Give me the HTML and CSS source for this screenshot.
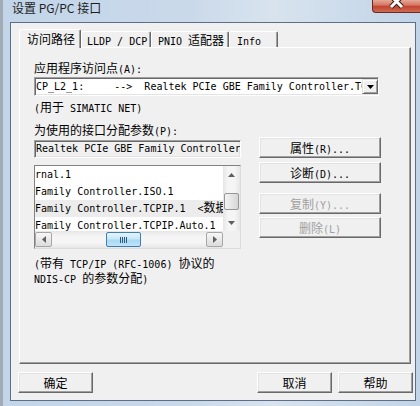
FILE: index.html
```html
<!DOCTYPE html>
<html lang="zh-CN">
<head>
    <meta charset="UTF-8">
    <meta name="viewport" content="width=device-width, initial-scale=1.0">
    <title>设置 PG/PC 接口</title>
    <link rel="stylesheet" href="styles.css">
</head>
<body>
    <div class="window">
        <div class="titlebar">
            <span class="title">设置 PG/PC 接口</span>
            <div class="close-btn" title="关闭">
                <svg width="47" height="13" viewBox="0 0 47 13">
                    <path d="M18 -4 L29 7 M29 -4 L18 7" stroke="#3b1a16" stroke-width="5" fill="none"/>
                    <path d="M18 -4 L29 7 M29 -4 L18 7" stroke="#fff" stroke-width="3" fill="none"/>
                </svg>
            </div>
        </div>

        <div class="client">
            <div class="tabs">
                <div class="tab active">访问路径</div>
                <div class="tab tab-lldp"><span class="m">LLDP / DCP</span></div>
                <div class="tab tab-pnio"><span class="m">PNIO </span>适配器</div>
                <div class="tab tab-info"><span class="m">Info</span></div>
            </div>

            <div class="tab-panel">
                <div class="label">应用程序访问点<span class="m">(A):</span></div>
                <div class="combo">
                    <span class="combo-text m">CP_L2_1:     -->  Realtek PCIe GBE Family Controller.TCPIP.1</span>
                    <span class="combo-arrow">
                        <svg width="7" height="4" viewBox="0 0 7 4"><polygon points="0,0 7,0 3.5,4" fill="#000"/></svg>
                    </span>
                </div>
                <div class="hint"><span class="m">(</span>用于<span class="m"> SIMATIC NET)</span></div>
                <div class="label label-params">为使用的接口分配参数<span class="m">(P):</span></div>

                <div class="params">
                    <div class="params-left">
                        <div class="field"><span class="m">Realtek PCIe GBE Family Controller.TCPIP.1</span></div>

                        <div class="listbox">
                            <div class="list-items">
                                <div class="list-item">rnal.1</div>
                                <div class="list-item">Family Controller.ISO.1</div>
                                <div class="list-item selected">Family Controller.TCPIP.1  &lt;<span class="cj">数据</span></div>
                                <div class="list-item">Family Controller.TCPIP.Auto.1</div>
                            </div>
                            <div class="vscroll">
                                <div class="sb-arrow">
                                    <svg width="7" height="4" viewBox="0 0 7 4"><polygon points="3.5,0 7,4 0,4" fill="#5f5f5f"/></svg>
                                </div>
                                <div class="vthumb"></div>
                                <div class="sb-arrow sb-end">
                                    <svg width="7" height="4" viewBox="0 0 7 4"><polygon points="0,0 7,0 3.5,4" fill="#5f5f5f"/></svg>
                                </div>
                            </div>
                            <div class="hscroll">
                                <div class="hbtn">
                                    <svg width="4" height="7" viewBox="0 0 4 7"><polygon points="0,3.5 4,0 4,7" fill="#5f5f5f"/></svg>
                                </div>
                                <div class="hthumb">
                                    <svg width="7" height="6" viewBox="0 0 7 6">
                                        <path d="M0.5 0 V6 M2.5 0 V6 M4.5 0 V6 M6.5 0 V6" stroke="#2c5a7c" stroke-width="1"/>
                                    </svg>
                                </div>
                                <div class="hbtn hbtn-end">
                                    <svg width="4" height="7" viewBox="0 0 4 7"><polygon points="0,0 4,3.5 0,7" fill="#5f5f5f"/></svg>
                                </div>
                            </div>
                            <div class="sb-corner"></div>
                        </div>

                        <p class="note"><span class="m">(</span>带有<span class="m"> TCP/IP (RFC-1006) </span>协议的<br><span class="m">NDIS-CP </span>的参数分配<span class="m">)</span></p>
                    </div>

                    <div class="params-buttons">
                        <button class="btn btn-side">属性<span class="m">(R)...</span></button>
                        <button class="btn btn-side btn-diag">诊断<span class="m">(D)...</span></button>
                        <button class="btn btn-side btn-copy" disabled>复制<span class="m">(Y)...</span></button>
                        <button class="btn btn-side btn-delete" disabled>删除<span class="m">(L)</span></button>
                    </div>
                </div>
            </div>

            <div class="dialog-footer">
                <button class="btn btn-footer">确定</button>
                <div class="footer-right">
                    <button class="btn btn-footer">取消</button>
                    <button class="btn btn-footer">帮助</button>
                </div>
            </div>
        </div>
    </div>
</body>
</html>
```

FILE: styles.css
```css
* {
    box-sizing: border-box;
}

body {
    margin: 0;
    width: 420px;
    height: 406px;
    overflow: hidden;
    font-family: "Noto Sans CJK SC", "Noto Sans", sans-serif;
    font-size: 12px;
    color: #000;
}

/* SimSun-like half width latin: 6px per char */
.m {
    font-family: "DejaVu Sans Mono", "Liberation Mono", monospace;
    font-size: 10px;
    line-height: 1;
    white-space: pre;
}

.cj {
    font-family: "Noto Sans CJK SC", sans-serif;
    font-size: 12px;
    line-height: 1;
}

.window {
    height: 406px;
    display: flex;
    flex-direction: column;
    padding: 0 4px 5px 10px;
    background: linear-gradient(90deg, #a3acb6 0, #a3acb6 3px, #c2d5e9 3px, #cad9ea 45%, #d8e3ee 65%, #c1d4e8 100%);
}

.titlebar {
    height: 22px;
    display: flex;
    justify-content: space-between;
    align-items: flex-start;
}

.title {
    padding-left: 2px;
    line-height: 16px;
    color: #1e1e1e;
}

.close-btn {
    width: 48px;
    height: 13px;
    margin-right: -4px;
    border-left: 1px solid #6b2a22;
    border-bottom: 1px solid #6b2a22;
    border-radius: 0 0 0 4px;
    background: linear-gradient(#e6a796 0%, #d77a66 40%, #c24532 55%, #cf6b52 100%);
    overflow: hidden;
}

.close-btn svg {
    display: block;
}

.client {
    flex: 1;
    display: flex;
    flex-direction: column;
    background: #f0f0f0;
    border: 1px solid #5d6f86;
}

/* ---- tabs ---- */
.tabs {
    position: relative;
    z-index: 1;
    display: flex;
    align-items: flex-end;
    height: 18px;
    margin: 6px 0 0 8px;
}

.tab {
    height: 16px;
    line-height: 15px;
    background: #f0f0f0;
    border: 1px solid;
    border-color: #fff #696969 transparent #fff;
    border-bottom: none;
    border-radius: 2px 2px 0 0;
    box-shadow: inset -1px 0 #a0a0a0;
    white-space: nowrap;
}

.tab.active {
    width: 62px;
    height: 19px;
    margin-bottom: -1px;
    padding-left: 7px;
    line-height: 17px;
}

.tab-lldp {
    width: 70px;
    padding-left: 5px;
}

.tab-pnio {
    width: 78px;
    padding-left: 6px;
}

.tab-info {
    width: 49px;
    padding-left: 7px;
}

.tab-panel {
    height: 317px;
    margin: 0 4px 0 8px;
    padding: 13px 0 0 14px;
    border: 1px solid;
    border-color: #fff #696969 #696969 #fff;
    box-shadow: inset -1px -1px #a0a0a0;
}

.label {
    line-height: 14px;
}

.label-params {
    margin-top: 9px;
}

.hint {
    margin-top: 4px;
    line-height: 14px;
}

/* sunken edit / combo */
.combo,
.field {
    display: flex;
    align-items: center;
    border: 1px solid;
    border-color: #a0a0a0 #fff #fff #a0a0a0;
    box-shadow: inset 1px 1px #696969, inset -1px -1px #e3e3e3;
    overflow: hidden;
}

.combo {
    width: 345px;
    height: 19px;
    margin-top: 2px;
    padding-left: 1px;
    background: #fff;
}

.combo-text {
    flex: 1;
    overflow: hidden;
    line-height: 17px;
}

.combo-arrow {
    width: 16px;
    height: 15px;
    display: flex;
    align-items: center;
    justify-content: center;
    background: #f0f0f0;
    border: 1px solid;
    border-color: #e3e3e3 #696969 #696969 #e3e3e3;
    box-shadow: inset 1px 1px #fff, inset -1px -1px #a0a0a0;
}

.combo-arrow svg {
    display: block;
}

.params {
    display: flex;
    align-items: flex-start;
}

.params-left {
    width: 207px;
}

.field {
    height: 18px;
    margin-top: 3px;
    padding-left: 1px;
    background: #f0f0f0;
    line-height: 16px;
}

/* ---- list box ---- */
.listbox {
    height: 84px;
    margin-top: 7px;
    display: grid;
    grid-template-columns: 1fr 17px;
    grid-template-rows: 1fr 17px;
    background: #fff;
    border: 1px solid;
    border-color: #828282 #dcdcdc #dcdcdc #828282;
}

.list-items {
    overflow: hidden;
    font-family: "DejaVu Sans Mono", "Liberation Mono", monospace;
    font-size: 10px;
}

.list-item {
    height: 17px;
    line-height: 17px;
    white-space: pre;
}

.list-item.selected {
    background: #ececec;
}

.vscroll {
    display: flex;
    flex-direction: column;
    background: linear-gradient(90deg, #e6e6e6, #f5f5f5 30%, #f5f5f5 70%, #e6e6e6);
}

.sb-arrow {
    height: 17px;
    display: flex;
    align-items: center;
    justify-content: center;
}

.sb-arrow svg,
.hbtn svg,
.hthumb svg {
    display: block;
}

.sb-end {
    margin-top: auto;
}

.vthumb {
    height: 17px;
    margin: 10px 1px 0;
    border: 1px solid #979797;
    border-radius: 2px;
    background: linear-gradient(90deg, #f4f4f4, #e6e6e6 50%, #d6d6d6);
}

.hscroll {
    display: flex;
    background: linear-gradient(#e6e6e6, #f5f5f5 30%, #f5f5f5 70%, #e6e6e6);
}

.hbtn {
    width: 17px;
    margin: 1px 0;
    display: flex;
    align-items: center;
    justify-content: center;
    border: 1px solid #a7a7a7;
    border-radius: 2px;
    background: linear-gradient(#f7f7f7, #e9e9e9 50%, #dcdcdc);
}

.hbtn-end {
    margin-left: auto;
}

.hthumb {
    width: 35px;
    margin: 1px 0 1px 54px;
    display: flex;
    align-items: center;
    justify-content: center;
    border: 1px solid #3c7fb1;
    border-radius: 2px;
    background: linear-gradient(#e5f4fc, #c9e8f8 45%, #a9d9f4 55%, #bfe3f7);
}

.sb-corner {
    background: #f0f0f0;
}

.note {
    margin: 6px 0 0;
    line-height: 15px;
}

/* ---- buttons ---- */
.btn {
    height: 21px;
    padding: 0;
    font: inherit;
    color: #000;
    line-height: 19px;
    background: #f0f0f0;
    border: 1px solid;
    border-color: #fff #696969 #696969 #fff;
    box-shadow: inset -1px -1px #a0a0a0, inset 1px 1px #e3e3e3;
    cursor: default;
}

.btn:disabled {
    color: #a0a0a0;
}

.params-buttons {
    display: flex;
    flex-direction: column;
    margin-left: 18px;
}

.btn-side {
    width: 122px;
}

.btn-diag {
    margin-top: 4px;
}

.btn-copy {
    margin-top: 10px;
}

.btn-delete {
    margin-top: 3px;
}

.dialog-footer {
    display: flex;
    justify-content: space-between;
    margin-top: 8px;
    padding: 0 2px 0 7px;
}

.footer-right {
    display: flex;
    gap: 6px;
}

.btn-footer {
    width: 75px;
}
```
